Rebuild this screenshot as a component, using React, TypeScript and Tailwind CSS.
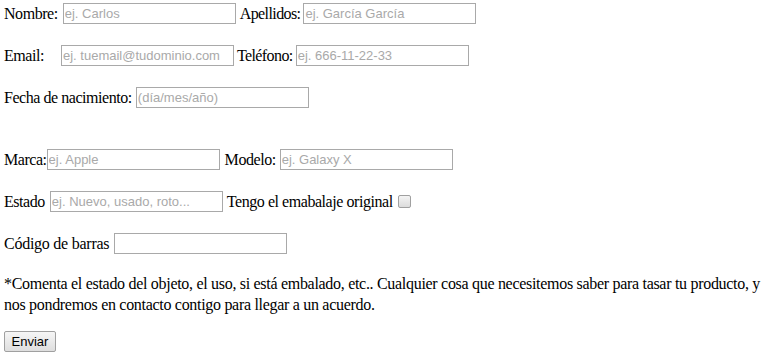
const serif = "font-['Liberation_Serif','Times_New_Roman',serif]";
const field =
  "h-[21px] w-[173px] border border-[#a9a9a9] bg-white px-[1px] text-[13px] font-['Liberation_Sans',Arial,sans-serif] tracking-normal text-black outline-none placeholder:text-[#a9a9a9]";

const Field = ({ placeholder, className = "" }: { placeholder?: string; className?: string }) => (
  <input type="text" placeholder={placeholder} className={`${field} ${className}`} />
);

const App = () => {
  return (
    <div className={`${serif} bg-white text-black text-[16px] tracking-[-0.45px] w-[774px] h-[361px] overflow-hidden pt-[3px] px-[4px]`}>
      <div className="flex items-center h-[21px]">
        <span>Nombre:</span>
        <Field placeholder="ej. Carlos" className="ml-[5px]" />
        <span className="ml-[4px] tracking-[-0.6px]">Apellidos:</span>
        <Field placeholder="ej. García García" className="ml-[3px]" />
      </div>

      <div className="flex items-center h-[21px] mt-[21px]">
        <span>Email:</span>
        <Field placeholder="ej. tuemail@tudominio.com" className="ml-[17px]" />
        <span className="ml-[3px] tracking-[-0.6px]">Teléfono:</span>
        <Field placeholder="ej. 666-11-22-33" className="ml-[3px]" />
      </div>

      <div className="flex items-center h-[21px] mt-[21px]">
        <span>Fecha de nacimiento:</span>
        <Field placeholder="(día/mes/año)" className="ml-[4px]" />
      </div>

      <div className="flex items-center h-[21px] mt-[41px]">
        <span>Marca:</span>
        <Field placeholder="ej. Apple" />
        <span className="ml-[5px]">Modelo:</span>
        <Field placeholder="ej. Galaxy X" className="ml-[4px]" />
      </div>

      <div className="flex items-center h-[21px] mt-[21px]">
        <span>Estado</span>
        <Field placeholder="ej. Nuevo, usado, roto..." className="ml-[5px]" />
        <span className="ml-[4px]">Tengo el emabalaje original</span>
        <label className="ml-[5px] w-[13px] h-[13px] rounded-[2px] border border-[#a0a0a0] bg-gradient-to-b from-[#f4f4f4] to-[#dcdcdc]" />
      </div>

      <div className="flex items-center h-[21px] mt-[21px]">
        <span className="tracking-[-0.25px]">Código de barras</span>
        <Field className="ml-[5px]" />
      </div>

      <p className="mt-[19px] leading-[21px] tracking-[-0.3px]">
        *Comenta el estado del objeto, el uso, si está embalado, etc.. Cualquier cosa que necesitemos saber para tasar tu
        producto, y nos pondremos en contacto contigo para llegar a un acuerdo.
      </p>

      <button
        type="button"
        className="mt-[16px] h-[21px] w-[52px] rounded-[2px] border border-[#a0a0a0] bg-gradient-to-b from-[#f6f6f6] to-[#dedede] text-[13px] font-['Liberation_Sans',Arial,sans-serif] tracking-normal text-black leading-none"
      >
        Enviar
      </button>
    </div>
  );
};

export default App;
